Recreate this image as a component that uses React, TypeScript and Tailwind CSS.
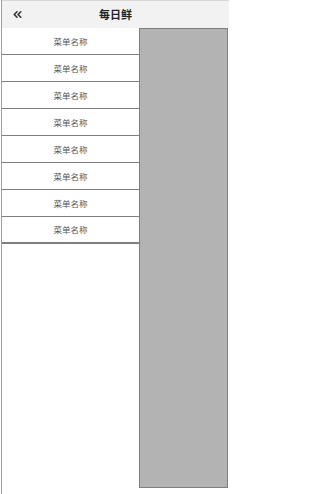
import { ChevronsLeft } from 'lucide-react';

const MENU = Array.from({ length: 8 }, () => '菜单名称');

export default function App() {
  return (
    <div className="w-[229px] h-[494px] bg-white flex overflow-hidden font-['Noto_Sans_CJK_SC',sans-serif]">
      {/* left rule */}
      <div className="w-[2px] shrink-0 bg-white border-r border-[#9aa0a6]" />
      <div className="flex-1 flex flex-col min-w-0">
        {/* header */}
        <header className="h-[28px] shrink-0 bg-[#f2f2f2] border-t border-[#d6d6d6] relative flex items-center justify-center">
          <ChevronsLeft className="absolute left-[9px] top-[7px] w-[13px] h-[13px] text-[#333]" strokeWidth={3} />
          <span className="text-[11px] font-bold text-[#222] leading-none">每日鲜</span>
        </header>
        <div className="flex-1 flex min-h-0 pb-[6px]">
          {/* menu column */}
          <div className="w-[137px] shrink-0 flex flex-col">
            {MENU.map((label, i) => (
              <div
                key={i}
                className={[
                  'h-[27px] shrink-0 flex items-center justify-center text-[8.5px] text-[#555] border-[#7f7f7f]',
                  i === MENU.length - 1 ? 'border-b-2' : 'border-b',
                ].join(' ')}
              >
                {label}
              </div>
            ))}
          </div>
          {/* content panel */}
          <div className="flex-1 mr-[1px] bg-[#b3b3b3] border border-[#7f7f7f]" />
        </div>
      </div>
    </div>
  );
}
